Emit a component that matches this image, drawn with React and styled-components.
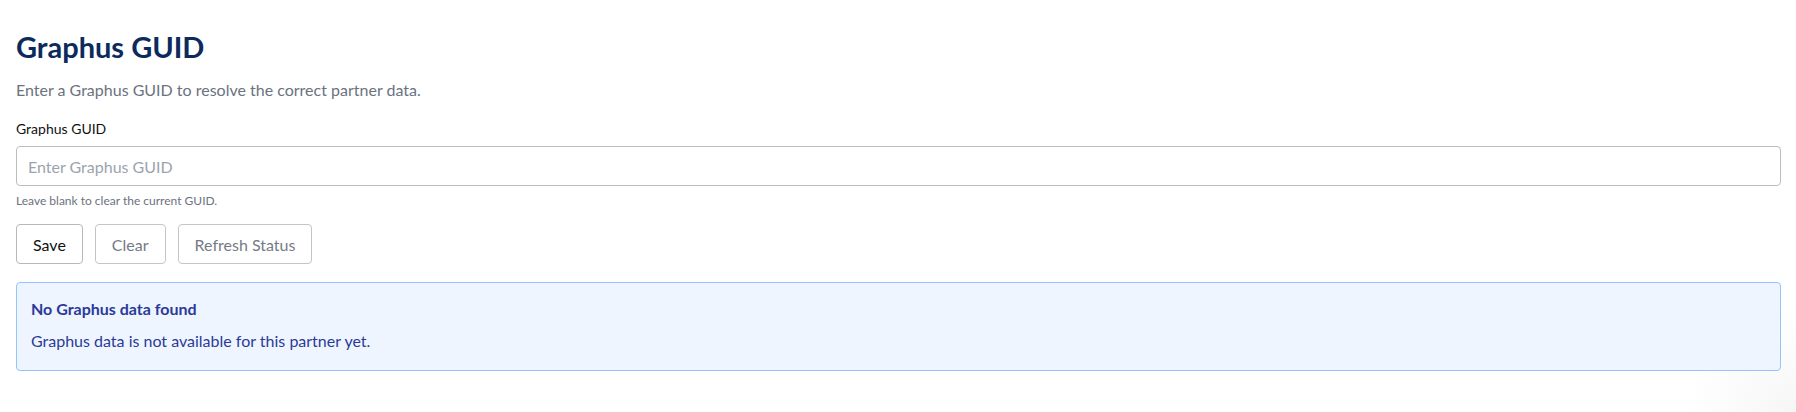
import React from 'react'
import styled, { createGlobalStyle } from 'styled-components'

const GlobalStyle = createGlobalStyle`
  body {
    margin: 0;
    min-height: 100vh;
    background: radial-gradient(circle at 100% 100%, #f6f6f6 0, #fafafa 45px, #fff 110px);
    font-family: Lato, "Noto Sans", Arial, sans-serif;
  }
`

const Page = styled.div`
  padding: 29px 15px 40px 16px;
  display: flex;
  flex-direction: column;
`

const Title = styled.h2`
  margin: 0;
  font-size: 29px;
  line-height: 35px;
  font-weight: 700;
  color: #0c2a5c;
`

const Lead = styled.p`
  margin: 15px 0 0;
  font-size: 16px;
  line-height: 22px;
  color: #6b7280;
`

const Field = styled.div`
  display: flex;
  flex-direction: column;
  margin-top: 19px;
`

const Label = styled.label`
  font-size: 14px;
  line-height: 18px;
  color: #111;
`

const Input = styled.input`
  margin-top: 8px;
  height: 40px;
  box-sizing: border-box;
  padding: 0 11px;
  border: 1px solid #bdbdbd;
  border-radius: 4px;
  font-family: inherit;
  font-size: 16px;
  color: #222;
  outline: none;

  &::placeholder {
    color: #9ca3af;
  }
`

const Hint = styled.small`
  margin-top: 6px;
  font-size: 12px;
  line-height: 17px;
  color: #6b7280;
`

const Actions = styled.div`
  display: flex;
  gap: 12px;
  margin-top: 15px;
`

const Button = styled.button`
  height: 40px;
  padding: 0 16px;
  background: #fff;
  border: 1px solid ${p => (p.$muted ? '#c4c4c4' : '#b8b8b8')};
  border-radius: 4px;
  font-family: inherit;
  font-size: 16px;
  color: ${p => (p.$muted ? '#757b86' : '#111')};
  cursor: pointer;
`

const Alert = styled.div`
  margin-top: 18px;
  padding: 15px 14px 18px;
  background: #eef5ff;
  border: 1px solid #93c5fd;
  border-radius: 4px;
  color: #2b3a9a;
`

const AlertTitle = styled.div`
  font-size: 16px;
  line-height: 22px;
  font-weight: 700;
`

const AlertText = styled.div`
  margin-top: 10px;
  font-size: 16px;
  line-height: 22px;
`

export default function App() {
  return (
    <>
      <GlobalStyle />
      <Page>
        <Title>Graphus GUID</Title>
        <Lead>Enter a Graphus GUID to resolve the correct partner data.</Lead>
        <Field>
          <Label htmlFor="guid">Graphus GUID</Label>
          <Input id="guid" type="text" placeholder="Enter Graphus GUID" />
          <Hint>Leave blank to clear the current GUID.</Hint>
        </Field>
        <Actions>
          <Button>Save</Button>
          <Button $muted>Clear</Button>
          <Button $muted>Refresh Status</Button>
        </Actions>
        <Alert>
          <AlertTitle>No Graphus data found</AlertTitle>
          <AlertText>Graphus data is not available for this partner yet.</AlertText>
        </Alert>
      </Page>
    </>
  )
}
